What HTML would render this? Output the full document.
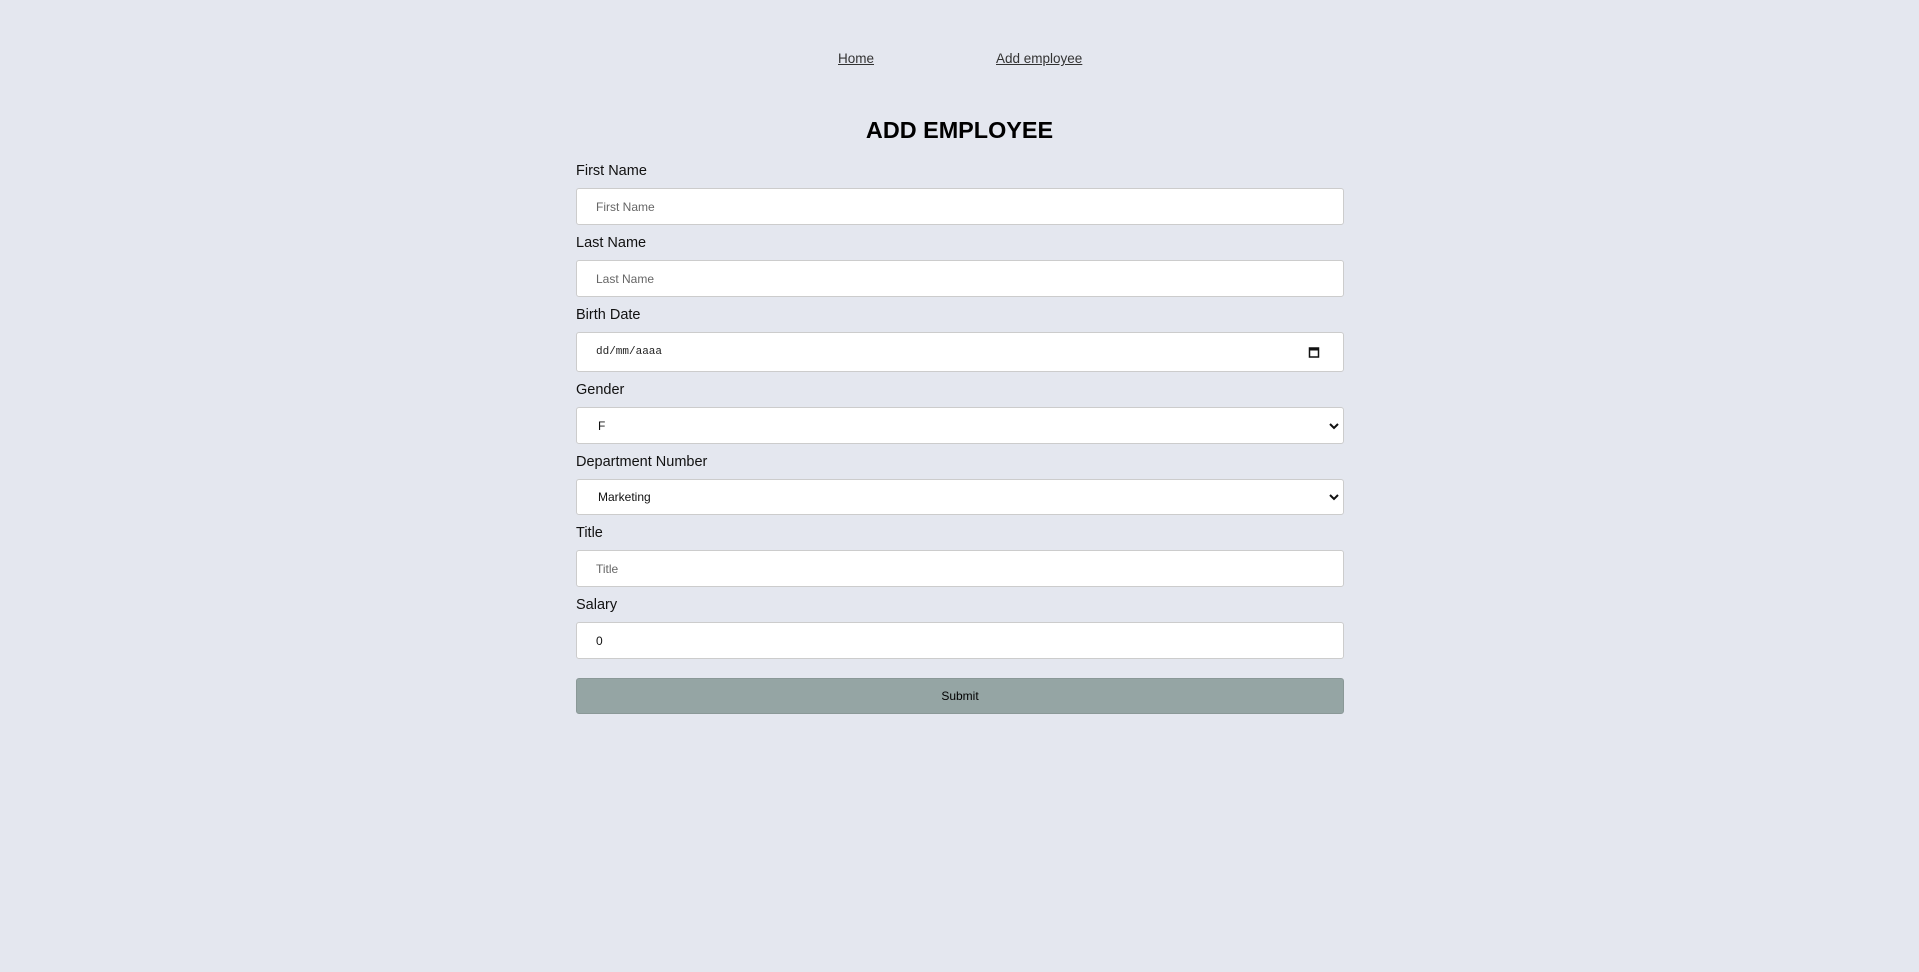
<!DOCTYPE html>
<html><head><style>
*{box-sizing:border-box;margin:0;padding:0}
body{width:1919px;height:972px;background:#e4e7ef;font-family:"Liberation Sans",Arial,sans-serif;position:relative;overflow:hidden;color:#111}
a{position:absolute;top:51px;font-size:13.5px;color:#333;text-decoration:underline}
h1{position:absolute;left:0;width:1919px;top:117px;text-align:center;font-size:23.4px;font-weight:bold;color:#000}
.l{position:absolute;left:576px;font-size:14.5px}
.b{position:absolute;left:576px;width:768px;background:#fff;border:1px solid #ccc;border-radius:3px;font-size:12px;padding-left:19px;display:flex;align-items:center}
.p{color:#666}
.c{position:absolute;right:4px;top:50%;transform:translateY(-50%)}
.btn{position:absolute;left:576px;width:768px;top:678px;height:36px;background:#95a5a4;border:1px solid #8a9897;border-radius:3px;font-size:12px;display:flex;align-items:center;justify-content:center;color:#000}
</style></head><body>
<a style="left:838px">Home</a>
<a style="left:996px">Add employee</a>
<h1>ADD EMPLOYEE</h1>
<div class="l" style="top:163px">First Name</div>
<div class="b p" style="top:188px;height:37px">First Name</div>
<div class="l" style="top:235px">Last Name</div>
<div class="b p" style="top:260px;height:37px">Last Name</div>
<div class="l" style="top:307px">Birth Date</div>
<div class="b" style="top:332px;height:40px;font-family:'Liberation Mono',monospace;font-size:11px;color:#222">dd/mm/aaaa<svg class="c" style="right:23px" width="12" height="13" viewBox="0 0 12 13"><rect x="1.5" y="2.5" width="9" height="9" fill="none" stroke="#111" stroke-width="1.5"/><rect x="1.5" y="2" width="9" height="3" fill="#111"/></svg></div>
<div class="l" style="top:382px">Gender</div>
<div class="b" style="top:407px;height:37px;padding-left:21px">F<svg class="c" width="10" height="8" viewBox="0 0 10 8"><path d="M1 2l4 4 4-4" fill="none" stroke="#111" stroke-width="2"/></svg></div>
<div class="l" style="top:454px">Department Number</div>
<div class="b" style="top:479px;height:36px;padding-left:21px">Marketing<svg class="c" width="10" height="8" viewBox="0 0 10 8"><path d="M1 2l4 4 4-4" fill="none" stroke="#111" stroke-width="2"/></svg></div>
<div class="l" style="top:525px">Title</div>
<div class="b p" style="top:550px;height:37px">Title</div>
<div class="l" style="top:597px">Salary</div>
<div class="b" style="top:622px;height:37px">0</div>
<div class="btn">Submit</div>
</body></html>
